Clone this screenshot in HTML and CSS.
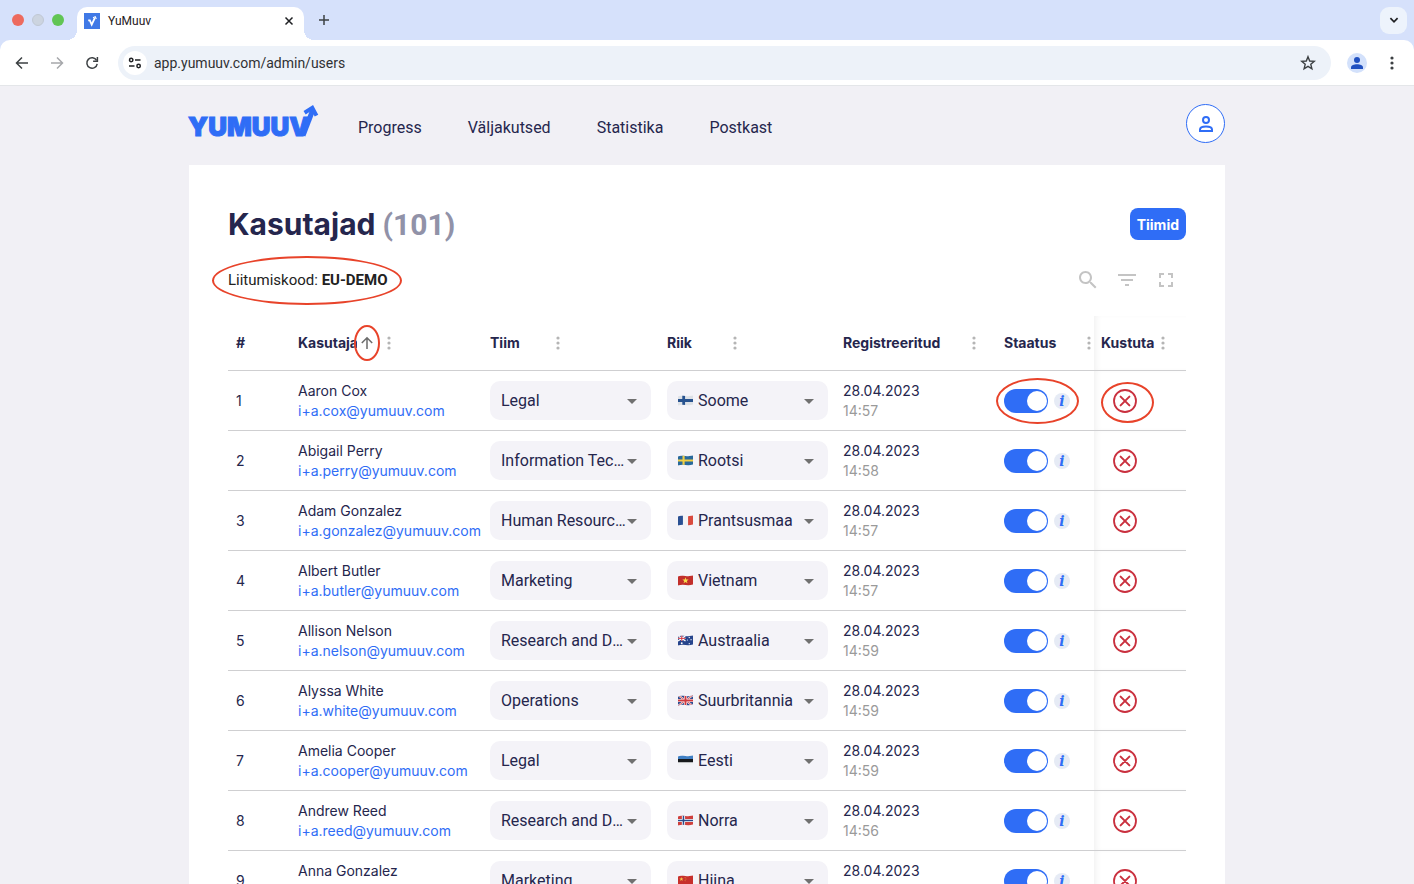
FILE: index.html
```html
<!DOCTYPE html>
<html lang="et">
<head>
<meta charset="utf-8">
<title>YuMuuv</title>
<link rel="stylesheet" href="styles.css">
</head>
<body>
<svg class="defs" aria-hidden="true">
  <defs>
    <clipPath id="wave"><path d="M0 1.2Q3.5 0 7 .7T14 .2V8.8Q10.5 10 7 9.3T0 9.8Z"/></clipPath>
    <symbol id="flag-fi" viewBox="0 0 14 10"><g clip-path="url(#wave)"><path fill="#dde1e6" d="M0 0h14v10H0z"/><path fill="#27528f" d="M0 3.6h14v2.8H0zM4 0h2.6v10H4z"/></g></symbol>
    <symbol id="flag-se" viewBox="0 0 14 10"><g clip-path="url(#wave)"><path fill="#28699c" d="M0 0h14v10H0z"/><path fill="#f0cf45" d="M0 4h14v2H0zM4.2 0h2v10h-2z"/></g></symbol>
    <symbol id="flag-fr" viewBox="0 0 14 10"><g clip-path="url(#wave)"><path fill="#f3f3f5" d="M0 0h14v10H0z"/><path fill="#2a5093" d="M0 0h4.6v10H0z"/><path fill="#d94a3e" d="M9.4 0H14v10H9.4z"/></g></symbol>
    <symbol id="flag-vn" viewBox="0 0 14 10"><g clip-path="url(#wave)"><path fill="#c22f2b" d="M0 0h14v10H0z"/><path fill="#f7dc4a" d="M7 2l.75 2.1 2.2.05-1.75 1.35.65 2.1L7 6.35 5.15 7.6l.65-2.1-1.75-1.35 2.2-.05z"/></g></symbol>
    <symbol id="flag-au" viewBox="0 0 14 10"><g clip-path="url(#wave)"><path fill="#26448c" d="M0 0h14v10H0z"/><path stroke="#fff" stroke-width="1.2" d="M0 .5l7 5M7 .5l-7 5M3.5 0v5.5M0 3h7"/><path stroke="#d0303a" stroke-width=".9" d="M3.5 0v5.5M0 3h7"/><g fill="#fff"><circle cx="3.5" cy="7.6" r=".9"/><circle cx="10.5" cy="2.2" r=".6"/><circle cx="10.5" cy="8" r=".6"/><circle cx="8.8" cy="4.6" r=".5"/><circle cx="12.2" cy="4.2" r=".6"/></g></g></symbol>
    <symbol id="flag-gb" viewBox="0 0 14 10"><g clip-path="url(#wave)"><path fill="#2f4c8f" d="M0 0h14v10H0z"/><path stroke="#fff" stroke-width="1.8" d="M0 0l14 10M14 0L0 10"/><path stroke="#cf3a40" stroke-width=".8" d="M0 0l14 10M14 0L0 10"/><path stroke="#fff" stroke-width="2.8" d="M7 0v10M0 5h14"/><path stroke="#cf3a40" stroke-width="1.8" d="M7 0v10M0 5h14"/></g></symbol>
    <symbol id="flag-ee" viewBox="0 0 14 10"><g clip-path="url(#wave)"><path fill="#f0f1f3" d="M0 0h14v10H0z"/><path fill="#3f7fc4" d="M0 0h14v3.6H0z"/><path fill="#17191d" d="M0 3.6h14v3.1H0z"/></g></symbol>
    <symbol id="flag-no" viewBox="0 0 14 10"><g clip-path="url(#wave)"><path fill="#cf3f3c" d="M0 0h14v10H0z"/><path fill="#fff" d="M0 3.5h14v3H0zM3.6 0h3v10h-3z"/><path fill="#2b4b8c" d="M0 4.3h14v1.4H0zM4.4 0h1.4v10H4.4z"/></g></symbol>
    <symbol id="flag-cn" viewBox="0 0 14 10"><g clip-path="url(#wave)"><path fill="#c7302c" d="M0 0h14v10H0z"/><path fill="#f5c84a" d="M3.2 1.8l.5 1.3 1.4.05-1.1.9.4 1.35-1.2-.8-1.2.8.4-1.35-1.1-.9 1.4-.05z"/><circle cx="6.6" cy="2" r=".4" fill="#f5c84a"/><circle cx="7.4" cy="3.6" r=".4" fill="#f5c84a"/><circle cx="6.6" cy="5.2" r=".4" fill="#f5c84a"/></g></symbol>
    <symbol id="dots" viewBox="0 0 4 14"><circle cx="2" cy="2" r="1.6"/><circle cx="2" cy="7" r="1.6"/><circle cx="2" cy="12" r="1.6"/></symbol>
    <symbol id="remove" viewBox="0 0 24 24"><circle cx="12" cy="12" r="11" fill="none" stroke="#c9303e" stroke-width="1.8"/><path d="M7.6 7.6l8.800 8.800M16.400 7.600l-8.800 8.800" fill="none" stroke="#c9303e" stroke-width="2" stroke-linecap="round"/></symbol>
  </defs>
</svg>

<header class="browser">
  <div class="tab-strip">
    <div class="window-buttons">
      <span class="light light-close"></span>
      <span class="light light-minimise"></span>
      <span class="light light-zoom"></span>
    </div>
    <div class="tab">
      <svg class="favicon" viewBox="0 0 16 16"><path fill="#4079e6" d="M0 0h16v16H0z"/><path d="M4.200 7.400h1.600l1.900 4.200L10.800 5" fill="none" stroke="#fff" stroke-width="1.800"/><path d="M9 4.800l2.300-1 1 2.200" fill="none" stroke="#fff" stroke-width="1.100"/></svg>
      <span class="tab-title">YuMuuv</span>
      <button class="icon-button" aria-label="Close tab"><svg width="10" height="10" viewBox="0 0 10 10"><path d="M1.500 1.500l7 7M8.500 1.500l-7 7" stroke="#1f2023" stroke-width="1.500"/></svg></button>
    </div>
    <button class="icon-button new-tab" aria-label="New tab"><svg width="12" height="12" viewBox="0 0 12 12"><path d="M6 1v10M1 6h10" stroke="#3c4043" stroke-width="1.500"/></svg></button>
    <button class="tab-search" aria-label="Search tabs"><svg width="10" height="8" viewBox="0 0 10 8"><path d="M1.400 2.200L5 5.800l3.600-3.600" fill="none" stroke="#1f2023" stroke-width="1.700"/></svg></button>
  </div>
  <div class="toolbar">
    <button class="icon-button" aria-label="Back"><svg width="14" height="14" viewBox="0 0 14 14"><path d="M13 7H2M7 1.500L1.500 7 7 12.500" fill="none" stroke="#3c4043" stroke-width="1.500"/></svg></button>
    <button class="icon-button" aria-label="Forward"><svg width="14" height="14" viewBox="0 0 14 14"><path d="M1 7h11M7 1.500L12.500 7 7 12.500" fill="none" stroke="#a6a8ab" stroke-width="1.500"/></svg></button>
    <button class="icon-button" aria-label="Reload"><svg width="14" height="14" viewBox="0 0 14 14"><path d="M11.600 4.400A5.200 5.200 0 1 0 12.200 7.800" fill="none" stroke="#3c4043" stroke-width="1.500"/><path d="M12.400 1v4.300H8.100" fill="none" stroke="#3c4043" stroke-width="1.500"/></svg></button>
    <div class="address">
      <button class="site-info" aria-label="Site information"><svg width="14" height="12" viewBox="0 0 14 12"><g fill="none" stroke="#1f2023" stroke-width="1.500"><circle cx="3.200" cy="3" r="1.700"/><path d="M7 3h5.500M1 9h5.500"/><circle cx="10.600" cy="9" r="1.700"/></g></svg></button>
      <input class="url" type="text" value="app.yumuuv.com/admin/users" aria-label="Address">
      <button class="icon-button" aria-label="Bookmark"><svg width="16" height="16" viewBox="0 0 16 16"><path d="M8 1.700l1.700 4.300 4.600.3-3.500 3 1.100 4.500L8 11.400l-3.900 2.400 1.100-4.500-3.500-3 4.600-.3z" fill="none" stroke="#3c4043" stroke-width="1.400"/></svg></button>
    </div>
    <button class="profile" aria-label="Profile"><svg width="14" height="14" viewBox="0 0 14 14" fill="#2050c0"><circle cx="7" cy="4" r="3"/><path d="M1 13v-1.600C1 9.400 4 8.300 7 8.300s6 1.100 6 3.100V13z"/></svg></button>
    <button class="icon-button browser-menu" aria-label="Menu"><svg width="4" height="14" fill="#3c4043"><use href="#dots"/></svg></button>
  </div>
</header>

<div class="page">
  <div class="container">
    <nav class="site-nav">
      <a class="logo" href="#" aria-label="Yumuuv">
        <svg width="130" height="34" viewBox="0 0 130 34"><text class="logo-text" x="-1" y="31">YUMUUV</text><path d="M114 30.500L123.800 5" fill="none" stroke="#2f6df6" stroke-width="5"/><path d="M115.600 7.700l7.700-4.800 4.200 7.700" fill="none" stroke="#2f6df6" stroke-width="4"/></svg>
      </a>
      <div class="links">
        <a href="#">Progress</a>
        <a href="#">Väljakutsed</a>
        <a href="#">Statistika</a>
        <a href="#">Postkast</a>
      </div>
      <button class="account" aria-label="Konto"><svg width="16" height="16" viewBox="0 0 16 16" fill="none" stroke="#2f6df6" stroke-width="2"><circle cx="8" cy="4" r="3"/><path d="M2 15v-1.500C2 11.500 4.500 10.500 8 10.500s6 1 6 3V15z"/></svg></button>
    </nav>

    <main class="card">
      <div class="title-row">
        <h1>Kasutajad <span class="count">(101)</span></h1>
        <button class="teams">Tiimid</button>
      </div>
      <div class="tools-row">
        <p class="join-code">Liitumiskood: <strong>EU-DEMO</strong><span class="ring ring-code"></span></p>
        <div class="tools">
          <button class="icon-button" aria-label="Otsi"><svg width="24" height="24" viewBox="0 0 24 24" fill="#c4c4c4"><path d="M15.500 14h-.79l-.28-.27C15.410 12.590 16 11.110 16 9.500 16 5.910 13.090 3 9.500 3S3 5.910 3 9.500 5.910 16 9.500 16c1.610 0 3.090-.59 4.230-1.570l.27.28v.79l5 4.990L20.490 19l-4.990-5zm-6 0C7.010 14 5 11.990 5 9.500S7.010 5 9.500 5 14 7.010 14 9.500 11.990 14 9.500 14z"/></svg></button>
          <button class="icon-button" aria-label="Filtreeri"><svg width="24" height="24" viewBox="0 0 24 24" fill="#c4c4c4"><path d="M10 18h4v-2h-4v2zM3 6v2h18V6H3zm3 7h12v-2H6v2z"/></svg></button>
          <button class="icon-button" aria-label="Täisekraan"><svg width="24" height="24" viewBox="0 0 24 24" fill="#c4c4c4"><path d="M7 14H5v5h5v-2H7v-3zm-2-4h2V7h3V5H5v5zm12 7h-3v2h5v-5h-2v3zM14 5v2h3v3h2V5h-5z"/></svg></button>
        </div>
      </div>
      <table class="users">
        <colgroup><col class="c-num"><col class="c-user"><col class="c-team"><col class="c-country"><col class="c-date"><col class="c-status"><col class="c-delete"></colgroup>
        <thead>
          <tr>
            <th class="num">#</th>
            <th><div class="head"><span class="clipped">Kasutaja</span><button class="icon-button sort" aria-label="Sordi"><svg width="14" height="14" viewBox="0 0 14 14"><path d="M7 13V2M1.800 7L7 1.800 12.200 7" fill="none" stroke="#6b6b6b" stroke-width="1.500"/></svg><span class="ring ring-sort"></span></button><svg class="dots"><use href="#dots"/></svg></div></th>
            <th><div class="head wide">Tiim<svg class="dots"><use href="#dots"/></svg></div></th>
            <th><div class="head wide">Riik<svg class="dots"><use href="#dots"/></svg></div></th>
            <th><div class="head spread">Registreeritud<svg class="dots"><use href="#dots"/></svg></div></th>
            <th><div class="head spread">Staatus<svg class="dots"><use href="#dots"/></svg></div></th>
            <th class="pinned"><div class="head">Kustuta<svg class="dots"><use href="#dots"/></svg></div></th>
          </tr>
        </thead>
        <tbody id="rows"></tbody>
      </table>
    </main>
  </div>
</div>
<script src="app.js"></script>
</body>
</html>
```

FILE: styles.css
```css
* { box-sizing: border-box; }

body {
  margin: 0;
  height: 100vh;
  display: flex;
  flex-direction: column;
  overflow: hidden;
  background: #f1f0f5;
  color: #25264d;
  font-family: Inter, "Liberation Sans", sans-serif;
  font-size: 14px;
}

button, input, select { font: inherit; color: inherit; }
a { text-decoration: none; }
svg { display: block; }
.defs { position: absolute; width: 0; height: 0; }

.icon-button {
  display: flex;
  padding: 0;
  border: 0;
  background: none;
}

/* Browser frame */
.browser {
  flex: none;
  background: #d6e1fb;
  border-bottom: 1px solid #e4e6e9;
}

.tab-strip {
  display: flex;
  align-items: center;
  height: 40px;
  padding: 0 7px 0 12px;
}

.window-buttons { display: flex; gap: 8px; width: 65px; }
.light { width: 12px; height: 12px; border-radius: 50%; }
.light-close { background: #ed6a5e; }
.light-minimise { background: #ccd4e0; border: 1px solid #c0c8d4; }
.light-zoom { background: #61c554; }

.tab {
  position: relative;
  display: flex;
  align-items: center;
  gap: 8px;
  width: 227px;
  height: 33px;
  margin-top: 7px;
  padding: 0 10px 6px 7px;
  border-radius: 10px 10px 0 0;
  background: #fff;
}

.tab::before, .tab::after {
  content: "";
  position: absolute;
  bottom: 0;
  width: 10px;
  height: 10px;
}
.tab::before { right: 100%; background: radial-gradient(circle at 0 0, transparent 10px, #fff 10px); }
.tab::after { left: 100%; background: radial-gradient(circle at 100% 0, transparent 10px, #fff 10px); }

.favicon { width: 16px; height: 16px; }
.tab-title { flex: 1; color: #1f2023; font-family: Roboto, sans-serif; font-size: 12px; line-height: 16px; }
.new-tab { margin-left: 14px; }

.tab-search {
  display: grid;
  place-items: center;
  width: 27px;
  height: 27px;
  margin-left: auto;
  padding: 0;
  border: 0;
  border-radius: 9px;
  background: #edf3fc;
}

.toolbar {
  display: flex;
  align-items: center;
  gap: 21px;
  height: 45px;
  padding: 0 20px 0 15px;
  border-radius: 10px 10px 0 0;
  background: #fff;
}

.address {
  flex: 1;
  display: flex;
  align-items: center;
  gap: 7px;
  height: 34px;
  margin-right: -5px;
  margin-left: -2px;
  padding: 0 15px 0 5px;
  border-radius: 17px;
  background: #edf2f9;
}

.site-info, .profile {
  display: grid;
  place-items: center;
  padding: 0;
  border: 0;
  border-radius: 50%;
}
.site-info { width: 24px; height: 24px; background: #fff; }
.profile { width: 20px; height: 20px; background: #d3e1fb; }
.browser-menu { margin-left: 2px; }

.url {
  flex: 1;
  padding: 0;
  border: 0;
  outline: 0;
  background: none;
  color: #303134;
  font-family: Roboto, "Liberation Sans", sans-serif;
  font-size: 14px;
}

/* Site */
.page {
  flex: 1;
  min-height: 0;
  overflow: auto;
  scrollbar-width: none;
}

.container { max-width: 1036px; margin: 0 auto; }

.site-nav { display: flex; align-items: center; height: 79px; }
.logo { margin-bottom: 8px; }
.logo svg { overflow: visible; }
.logo-text { fill: #2f6df6; stroke: #2f6df6; stroke-width: 1px; font-size: 26px; font-weight: 900; }

.links {
  display: flex;
  gap: 46px;
  margin: 5px 0 0 39px;
  font-family: Roboto, "Liberation Sans", sans-serif;
  font-size: 16px;
  line-height: 20px;
}
.links a { color: #25264d; }

.account {
  display: grid;
  place-items: center;
  width: 39px;
  height: 39px;
  margin: 0 0 4px auto;
  padding: 0;
  border: 1px solid #2f6df6;
  border-radius: 50%;
  background: #fff;
}

.card { padding: 39px; background: #fff; }

.title-row, .tools-row { display: flex; align-items: center; justify-content: space-between; }
h1 { margin: 0; font-size: 30px; line-height: 40px; font-weight: 700; }
.count { color: #9192a8; font-family: Roboto, "Liberation Sans", sans-serif; line-height: 30px; }

.teams {
  height: 32px;
  padding: 0 7px;
  border: 0;
  border-radius: 8px;
  background: #2f6df6;
  color: #fff;
  font-weight: 700;
}

.tools-row { height: 72px; }
.join-code {
  position: relative;
  margin: 0;
  color: #222;
  font-family: Roboto, "Liberation Sans", sans-serif;
  font-size: 15px;
  line-height: 20px;
}
.join-code strong { font-weight: 700; }
.tools { display: flex; gap: 15px; padding-right: 8px; }

.ring {
  position: absolute;
  border: 2px solid #e8432a;
  border-radius: 50%;
  pointer-events: none;
}
.ring-code { inset: -14px -14px -15px -16px; }
.ring-sort { inset: -11px -6px; }
.ring-status { inset: -9px -9px -11px -8px; }
.ring-delete { inset: -7px -17px -10px -12px; }

/* Users table */
.users { width: 100%; table-layout: fixed; border-collapse: collapse; }
.c-num { width: 62px; }
.c-user { width: 192px; }
.c-team { width: 177px; }
.c-country { width: 176px; }
.c-date { width: 161px; }
.c-status { width: 98px; }

.users tr { border-bottom: 1px solid #cfcfd1; }
.users th, .users td { padding: 0 8px; text-align: left; }
.users th { height: 54px; font-weight: 700; }
.users td { height: 60px; line-height: 20px; }
.users td.text, .users td.pinned { padding-top: 2px; }
.users .pinned { padding-left: 7px; box-shadow: inset 5px 0 6px -3px rgba(0, 0, 0, 0.06); }

.head { display: flex; align-items: center; gap: 7px; }
.wide { width: 70px; justify-content: space-between; }
.spread { justify-content: space-between; }
.users th:nth-child(5) .spread { padding-right: 12px; }
.users th:nth-child(6) .spread { margin-right: -5px; }
.clipped { width: 59px; overflow: hidden; }
.sort { position: relative; margin-left: -4px; }
.dots { width: 4px; height: 14px; fill: #b5b5b5; }
.head .sort + .dots { margin-left: 6px; }

.email { display: block; color: #2f6df6; }
.time { display: block; color: #9a9a9a; }

.picker { position: relative; display: block; width: 161px; }
.picker select {
  display: block;
  width: 100%;
  height: 39px;
  padding: 1px 23px 0 11px;
  border: 0;
  border-radius: 10px;
  appearance: none;
  background: #f4f3f8;
  font-family: Roboto, "Liberation Sans", sans-serif;
  font-size: 16px;
  text-overflow: ellipsis;
}
.picker-flag select { padding-left: 31px; }
.flag { position: absolute; top: 14px; left: 11px; width: 15px; height: 11px; pointer-events: none; }
.picker::after {
  content: "";
  position: absolute;
  top: 18px;
  right: 14px;
  border: 5px solid transparent;
  border-top-color: #707070;
  border-bottom: 0;
  pointer-events: none;
}

.status { position: relative; display: inline-flex; align-items: center; gap: 6px; padding-top: 2px; vertical-align: middle; }
.switch {
  appearance: none;
  display: flex;
  align-items: center;
  justify-content: flex-end;
  width: 44px;
  height: 24px;
  margin: 0;
  padding: 0 1px;
  border-radius: 12px;
  background: #2f6df6;
}
.switch::before { content: ""; width: 20px; height: 20px; border-radius: 50%; background: #fff; }
.info {
  display: grid;
  place-items: center;
  width: 16px;
  height: 16px;
  padding: 0;
  border: 0;
  border-radius: 50%;
  background: #e6ebf5;
  color: #2f6df6;
  font: italic 700 14px/16px "DejaVu Serif", serif;
}
.delete { position: relative; margin-left: 12px; }
```

FILE: app.js
```js
const teams = ["Legal", "Information Technology", "Human Resources", "Marketing", "Research and Development", "Operations"];
const countries = { fi: "Soome", se: "Rootsi", fr: "Prantsusmaa", vn: "Vietnam", au: "Austraalia", gb: "Suurbritannia", ee: "Eesti", no: "Norra", cn: "Hiina" };
const users = [
  ["Aaron Cox", "cox", 0, "fi", "14:57"],
  ["Abigail Perry", "perry", 1, "se", "14:58"],
  ["Adam Gonzalez", "gonzalez", 2, "fr", "14:57"],
  ["Albert Butler", "butler", 3, "vn", "14:57"],
  ["Allison Nelson", "nelson", 4, "au", "14:59"],
  ["Alyssa White", "white", 5, "gb", "14:59"],
  ["Amelia Cooper", "cooper", 0, "ee", "14:59"],
  ["Andrew Reed", "reed", 4, "no", "14:56"],
  ["Anna Gonzalez", "gonzalez", 3, "cn", "14:57"]
];

const option = (value, label, selected) =>
  `<option value="${value}"${selected ? " selected" : ""}>${label}</option>`;

document.getElementById("rows").innerHTML = users.map(([name, mail, team, country, time], i) => `
  <tr>
    <td class="text">${i + 1}</td>
    <td class="text">${name}<a class="email" href="#">i+a.${mail}@yumuuv.com</a></td>
    <td><label class="picker"><select aria-label="Tiim">${teams.map((t, n) => option(n, t, n === team)).join("")}</select></label></td>
    <td><label class="picker picker-flag"><select aria-label="Riik">${Object.entries(countries).map(([c, label]) => option(c, label, c === country)).join("")}</select><svg class="flag"><use href="#flag-${country}"/></svg></label></td>
    <td class="text">28.04.2023<span class="time">${time}</span></td>
    <td><span class="status"><input class="switch" type="checkbox" role="switch" checked aria-label="Staatus"><button class="info" aria-label="Info">i</button>${i === 0 ? '<span class="ring ring-status"></span>' : ""}</span></td>
    <td class="pinned"><button class="icon-button delete" aria-label="Kustuta"><svg width="24" height="24"><use href="#remove"/></svg>${i === 0 ? '<span class="ring ring-delete"></span>' : ""}</button></td>
  </tr>`).join("");
```
